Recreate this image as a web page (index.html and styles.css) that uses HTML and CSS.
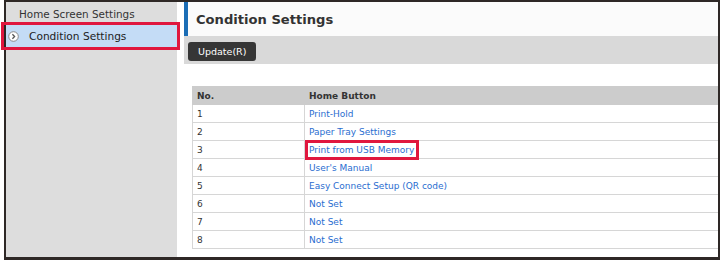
FILE: index.html
```html
<!DOCTYPE html>
<html lang="en">
<head>
    <meta charset="UTF-8">
    <title>Condition Settings</title>
    <link rel="stylesheet" href="styles.css">
</head>
<body>
    <div class="frame">
        <nav class="sidebar">
            <div class="nav-item">Home Screen Settings</div>
            <div class="nav-item active marked">
                <span class="nav-icon">
                    <svg width="11" height="11" viewBox="0 0 11 11">
                        <circle cx="5.5" cy="5.5" r="4.8" fill="#fff" stroke="#8a8a8a" stroke-width="1"/>
                        <path d="M4.4 3.2 L6.6 5.5 L4.4 7.8" fill="none" stroke="#555" stroke-width="1.3"/>
                    </svg>
                </span>
                Condition Settings
            </div>
        </nav>

        <main class="content">
            <div class="page-title">
                <h1>Condition Settings</h1>
            </div>
            <div class="toolbar">
                <button class="btn">Update(R)</button>
            </div>

            <table class="home-table">
                <thead>
                    <tr><th class="col-no">No.</th><th>Home Button</th></tr>
                </thead>
                <tbody>
                    <tr><td>1</td><td><a href="#">Print-Hold</a></td></tr>
                    <tr><td>2</td><td><a href="#">Paper Tray Settings</a></td></tr>
                    <tr><td>3</td><td><a href="#" class="marked">Print from USB Memory</a></td></tr>
                    <tr><td>4</td><td><a href="#">User's Manual</a></td></tr>
                    <tr><td>5</td><td><a href="#">Easy Connect Setup (QR code)</a></td></tr>
                    <tr><td>6</td><td><a href="#">Not Set</a></td></tr>
                    <tr><td>7</td><td><a href="#">Not Set</a></td></tr>
                    <tr><td>8</td><td><a href="#">Not Set</a></td></tr>
                </tbody>
            </table>
        </main>
    </div>
</body>
</html>
```

FILE: styles.css
```css
* {
    margin: 0;
    padding: 0;
    box-sizing: border-box;
}

body {
    font-family: "DejaVu Sans", Verdana, sans-serif;
    color: #333;
    background: #fff;
    padding: 0 2px 0 4px;
}

.frame {
    display: flex;
    height: 260px;
    border: 2px solid #2e2826;
    border-bottom-width: 3px;
    background: #fff;
}

/* left menu */
.sidebar {
    width: 171px;
    background: #dddddd;
    padding-top: 1px;
}

.nav-item {
    position: relative;
    height: 21px;
    line-height: 22px;
    padding-left: 13px;
    font-size: 10.4px;
    color: #333;
}

.nav-item.active {
    height: 22px;
    margin-top: 1px;
    line-height: 22px;
    padding-left: 2px;
    background: #c4dcf6;
    font-size: 10.6px;
    color: #222;
    display: flex;
    align-items: center;
}

.nav-icon {
    display: inline-flex;
    width: 11px;
    height: 11px;
    margin-right: 10px;
}

.nav-item.marked::after {
    content: "";
    position: absolute;
    top: -3px;
    bottom: -3px;
    left: -5px;
    right: -3px;
    border: 3px solid #e0173e;
}

/* main area */
.content {
    flex: 1;
    margin-left: 7px;
}

.page-title {
    height: 34px;
    background: #fbfbfb;
    border-left: 4px solid #1b6db5;
    padding-left: 8px;
    display: flex;
    align-items: center;
}

.page-title h1 {
    font-size: 13.1px;
    font-weight: bold;
    color: #333;
}

.toolbar {
    height: 28px;
    background: #d9d9d9;
    padding: 4px 4px;
}

.btn {
    height: 19px;
    padding: 0 10px;
    border: none;
    border-radius: 3px;
    background: #363636;
    color: #fff;
    font-family: "DejaVu Sans", Verdana, sans-serif;
    font-size: 9.5px;
}

.home-table {
    margin: 22px 0 0 8px;
    width: calc(100% - 8px);
    border-collapse: collapse;
    font-size: 9px;
}

.home-table th,
.home-table td {
    height: 18px;
    padding: 0 4px;
    text-align: left;
    border: 1px solid #d6d6d6;
    border-right: none;
}

.home-table th {
    background: #cccccc;
    color: #333;
    font-weight: bold;
    border-color: #cccccc;
}

.home-table .col-no {
    width: 112px;
}

.home-table a {
    color: #2a6dd0;
    text-decoration: none;
    position: relative;
}

.home-table a.marked::after {
    content: "";
    position: absolute;
    top: -5px;
    bottom: -5px;
    left: -4px;
    right: -5px;
    border: 3px solid #e0173e;
}
```
